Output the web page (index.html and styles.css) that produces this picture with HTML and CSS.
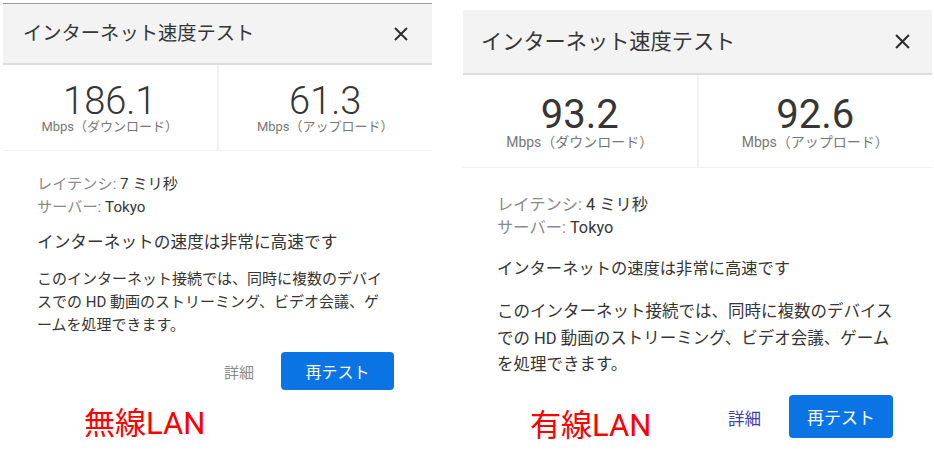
FILE: index.html
```html
<!DOCTYPE html>
<html lang="ja">
<head>
<meta charset="utf-8">
<link rel="stylesheet" href="styles.css">
</head>
<body>
<div class="page">
  <section class="card card-wifi">
    <header class="card-head">
      <h1 class="title">インターネット速度テスト</h1>
      <svg class="close" viewBox="0 0 14 14" aria-hidden="true"><path d="M1 1L13 13M13 1L1 13"/></svg>
    </header>
    <div class="metrics">
      <div class="metric">
        <div class="num">186.1</div>
        <div class="unit">Mbps（ダウンロード）</div>
      </div>
      <div class="metric">
        <div class="num">61.3</div>
        <div class="unit">Mbps（アップロード）</div>
      </div>
    </div>
    <div class="body">
      <div class="info"><span class="key">レイテンシ:</span> 7 ミリ秒</div>
      <div class="info"><span class="key">サーバー:</span> Tokyo</div>
      <p class="headline">インターネットの速度は非常に高速です</p>
      <p class="desc">このインターネット接続では、同時に複数のデバイ<br>スでの HD 動画のストリーミング、ビデオ会議、ゲ<br>ームを処理できます。</p>
      <div class="actions">
        <span class="detail">詳細</span>
        <button class="retest">再テスト</button>
      </div>
      <div class="tag">無線LAN</div>
    </div>
  </section>

  <section class="card card-wired">
    <header class="card-head">
      <h1 class="title">インターネット速度テスト</h1>
      <svg class="close" viewBox="0 0 14 14" aria-hidden="true"><path d="M1 1L13 13M13 1L1 13"/></svg>
    </header>
    <div class="metrics">
      <div class="metric">
        <div class="num">93.2</div>
        <div class="unit">Mbps（ダウンロード）</div>
      </div>
      <div class="metric">
        <div class="num">92.6</div>
        <div class="unit">Mbps（アップロード）</div>
      </div>
    </div>
    <div class="body">
      <div class="info"><span class="key">レイテンシ:</span> 4 ミリ秒</div>
      <div class="info"><span class="key">サーバー:</span> Tokyo</div>
      <p class="headline">インターネットの速度は非常に高速です</p>
      <p class="desc">このインターネット接続では、同時に複数のデバイス<br>での HD 動画のストリーミング、ビデオ会議、ゲーム<br>を処理できます。</p>
      <div class="actions">
        <div class="tag">有線LAN</div>
        <span class="detail">詳細</span>
        <button class="retest">再テスト</button>
      </div>
    </div>
  </section>
</div>
</body>
</html>
```

FILE: styles.css
```css
* { box-sizing: border-box; }
html, body { margin: 0; padding: 0; background: #fff; }
body {
  font-family: Roboto, "Noto Sans CJK JP", sans-serif;
  color: #353535;
  width: 934px;
  height: 457px;
  overflow: hidden;
}
.page {
  display: flex;
  align-items: flex-start;
}
.card { background: #fff; }
.card-wifi { width: 429px; margin: 3px 0 0 3px; }
.card-wired { width: 469px; margin: 10px 0 0 31px; }

.card-head {
  display: flex;
  align-items: center;
  justify-content: space-between;
  background: #f3f3f3;
  border-bottom: 2px solid #dcdcdc;
}
.card-wifi .card-head {
  height: 62px;
  border-top: 1px solid #9a9a9a;
  padding: 0 24px 0 20px;
}
.card-wired .card-head {
  height: 65px;
  padding: 0 22px 0 18px;
}
.title {
  margin: 0;
  font-weight: 400;
  color: #363636;
  white-space: nowrap;
}
.card-wifi .title { font-size: 19.3px; line-height: 24px; }
.card-wired .title { font-size: 21.2px; line-height: 26px; }
.close { fill: none; stroke: #2e2e2e; stroke-width: 2; }
.card-wifi .close { width: 14px; height: 14px; }
.card-wired .close { width: 15px; height: 15px; }

.metrics {
  display: flex;
  border-bottom: 1px solid #f0f0f0;
}
.metric {
  flex: 1;
  text-align: center;
}
.metric + .metric { border-left: 2px solid #f1f1f1; }
.card-wifi .metric { padding: 17px 0 16px; }
.card-wired .metric { padding: 20px 0 18px; }
.num { color: #363636; }
.card-wifi .num { font-size: 38px; line-height: 38px; font-weight: 300; }
.card-wired .num { font-size: 40px; line-height: 40px; font-weight: 400; }
.unit { color: #777; line-height: 14px; white-space: nowrap; }
.card-wifi .unit { font-size: 13px; }
.card-wired .unit { font-size: 14px; }

.body { color: #353535; }
.card-wifi .body { padding: 21.5px 38px 0 34px; font-size: 15.2px; }
.card-wired .body { padding: 24.5px 39px 0 34px; font-size: 16.3px; }
.info { line-height: 23px; white-space: nowrap; }
.key { color: #8a8a8a; }
.headline { margin: 0; line-height: 23px; white-space: nowrap; }
.desc { margin: 0; white-space: nowrap; }
.card-wifi .headline { margin-top: 12px; font-size: 16.7px; }
.card-wifi .desc { margin-top: 14px; line-height: 23px; font-size: 15px; }
.card-wired .headline { margin-top: 18px; }
.card-wired .desc { margin-top: 19.5px; line-height: 26.5px; font-size: 16.5px; }

.actions {
  display: flex;
  align-items: center;
  justify-content: flex-end;
}
.card-wifi .actions { margin-top: 15.5px; gap: 27px; }
.card-wired .actions { margin-top: 16px; gap: 28px; align-items: flex-start; }
.detail { white-space: nowrap; }
.card-wifi .detail { color: #8a8a8a; font-size: 15px; }
.card-wired .detail { color: #3d3dab; font-size: 16.5px; margin-top: 11px; }
.retest {
  border: none;
  background: #0b74e4;
  color: #fff;
  font-family: inherit;
  border-radius: 4px;
  padding: 0;
}
.card-wifi .retest { width: 113px; height: 38px; font-size: 16px; }
.card-wired .retest { width: 104px; height: 43px; font-size: 17px; }

.tag {
  color: #ff0000;
  font-size: 31px;
  line-height: 30px;
  white-space: nowrap;
}
.card-wifi .tag { margin: 19px 0 0 47px; }
.card-wired .tag { margin: 16px auto 0 33px; }
```
